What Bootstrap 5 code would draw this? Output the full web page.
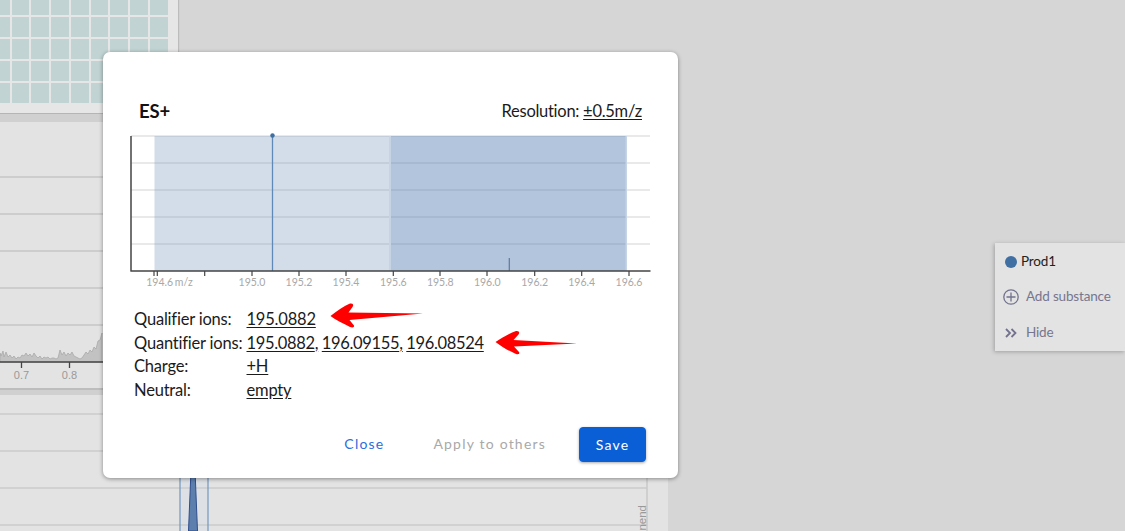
<!DOCTYPE html>
<html lang="en">
<head>
<meta charset="utf-8">
<title>ES+</title>
<link href="https://cdn.jsdelivr.net/npm/bootstrap@5.3.0/dist/css/bootstrap.min.css" rel="stylesheet">
<style>
html,body{height:100%}
body{background:#d6d6d6;font-family:Lato,"Open Sans",sans-serif;color:#1b1b1b;overflow:hidden;width:1125px;height:531px;position:relative}
.plate-panel{width:178px;height:113px;background:#e6e6e6;box-shadow:1px 0 1px rgba(0,0,0,.12)}
.plate-grid{display:grid;grid-template-columns:9.5px repeat(8,17.75px);grid-template-rows:15px repeat(4,20px);gap:2px;width:168px}
.plate-grid span{background:#c1d3d3}
.trace-panel{width:668px;background:#e3e3e3;line-height:0}
.trace-panel svg{display:block}
.sep-band{width:668px;height:9px;background:#d0d0d0;border-top:1px solid #b5b5b5}
.sep-band-b{height:7px;border-top:2px solid #bdbdbd}
.dialog-box{position:absolute;left:103px;top:52px;width:575px;height:426px;background:#fff;border:0;border-radius:7px;box-shadow:0 1px 4px rgba(0,0,0,.4);padding:47px 32px 16px 31px}
.dialog-head{padding-left:5px;padding-right:4px;height:24px;flex:none}
.dialog-title{font-size:18.5px;font-weight:700;margin:0;line-height:24px;color:#111;letter-spacing:-.2px}
.res-text{font-size:16.5px;line-height:24px;margin-top:-1px;letter-spacing:-.28px}
.under{color:inherit;text-decoration:underline;text-underline-offset:2px}
.spec-chart{display:block;flex:none;margin:7px -7px 0 -4px}
.ion-table{display:grid;flex:none;grid-template-columns:112.5px auto;font-size:16.5px;letter-spacing:-.2px;line-height:23.7px;margin-top:18px;justify-content:start}
.ion-list{letter-spacing:-.33px;word-spacing:-.3px}
.dialog-foot{flex:none;margin-top:24px;align-items:center;justify-content:flex-end}
.act-btn{font-size:14px;letter-spacing:1.2px;padding:0;border:0;background:none;line-height:20px}
.act-close{color:#2a6fdb;margin-right:49px;text-decoration:none}
.act-apply{color:#a9a9a9;margin-right:33px;text-decoration:none}
.act-save{background:#0a5fd6;border-color:#0a5fd6;color:#fff;width:67px;height:35px;padding:0;font-size:14px;letter-spacing:1.2px;border-radius:4px;box-shadow:0 1px 3px rgba(0,0,0,.35)}
.red-arrow{position:absolute}
.side-tools{position:absolute;left:995px;top:243px;width:130px;height:108px;background:#e3e3e3;box-shadow:-1px 1px 4px rgba(0,0,0,.25);font-size:13.5px;letter-spacing:-.17px;padding-left:9px}
.tool-row{height:36px;align-items:center}
.tool-row-first{height:36px;color:#222;padding-top:1px}
.tool-dot{width:12px;height:12px;border-radius:50%;background:#3f6fa3;margin:0 4px 0 1px}
.tool-ico{width:16px;margin-right:7px;flex:none;margin-left:-1px}
.tool-label{color:#76768f;margin-bottom:2px}
</style>
</head>
<body>
<div class="plate-panel">
  <div class="plate-grid">
    <span></span><span></span><span></span><span></span><span></span><span></span><span></span><span></span><span></span>
    <span></span><span></span><span></span><span></span><span></span><span></span><span></span><span></span><span></span>
    <span></span><span></span><span></span><span></span><span></span><span></span><span></span><span></span><span></span>
    <span></span><span></span><span></span><span></span><span></span><span></span><span></span><span></span><span></span>
    <span></span><span></span><span></span><span></span><span></span><span></span><span></span><span></span><span></span>
  </div>
</div>
<div class="sep-band"></div>
<div class="trace-panel">
  <svg width="668" height="266" viewBox="0 122 668 266">
    <g stroke="#c6c6c6" stroke-width="1.300"><path d="M0 177H668M0 214H668M0 251H668M0 288H668M0 325H668"/></g>
    <path d="M0 362V353L1 356 3 351 4 357 6 352 8 357 10 355 12 358 14 356 16 359 18 357 20 358 22 355 24 356 26 353 28 356 30 354 32 357 34 353 36 356 38 358 40 356 42 359 44 357 46 358 48 357 50 359 52 358 54 358 56 359 58 358 60 350 62 355 64 352 66 356 68 353 70 355 72 352 74 356 76 357 78 358 80 359 82 358 84 355 86 352 88 354 90 350 92 352 94 347 96 349 98 341 100 340 102 333V362Z" fill="#c2c2c2" stroke="#aaa" stroke-width=".8"/>
    <path d="M0 362H103M21.5 362V368M69.5 362V368" stroke="#444" stroke-width="1.3" fill="none"/>
    <g font-family="'Liberation Sans',sans-serif" font-size="11" fill="#999" text-anchor="middle"><text x="21.5" y="379">0.7</text><text x="69.5" y="379">0.8</text></g>
  </svg>
</div>
<div class="sep-band sep-band-b"></div>
<div class="trace-panel">
  <svg width="668" height="136" viewBox="0 395 668 136">
    <rect x="180" y="395" width="28" height="136" fill="#dde1e6"/>
    <path d="M0 414H647M0 451H647M0 488H647M0 525H647" stroke="#cbcbcb" stroke-width="1.3"/>
    <path d="M647 395V531" stroke="#c9c9c9" stroke-width="1.5"/>
    <path d="M180 395V531M208 395V531" stroke="#7397c0" stroke-width="1.2"/>
    <path d="M191 470H195L197.5 531H188.500Z" fill="#5d7fad" stroke="#2f4e8c" stroke-width="1"/>
    <text transform="translate(646 505) rotate(-90)" font-family="'Liberation Sans',sans-serif" font-size="11.500" fill="#999" text-anchor="end">nend</text>
  </svg>
</div>

<div class="card dialog-box">
  <div class="dialog-head d-flex justify-content-between align-items-center">
    <h5 class="dialog-title">ES+</h5>
    <div class="res-text">Resolution: <a href="#" class="under">±0.5m/z</a></div>
  </div>
  <svg class="spec-chart" width="523" height="160" viewBox="130 130 523 160">
    <path d="M131 136H650M131 163H650M131 190H650M131 217H650M131 244H650" stroke="#e2e2e2" stroke-width="1.5"/>
    <rect x="154.500" y="136" width="235.500" height="135" fill="#7e9cc1" fill-opacity=".34"/>
    <rect x="391" y="136" width="235" height="135" fill="#5e86b5" fill-opacity=".48"/>
    <rect x="389" y="136" width="2" height="135" fill="#c6d3e2"/>
    <rect x="625.500" y="136" width="1.500" height="135" fill="#c6d5e6"/>
    <path d="M272.500 136V271" stroke="#5f8ab8" stroke-width="1.300"/>
    <circle cx="272.500" cy="135.500" r="2.200" fill="#3f6fa3"/>
    <path d="M509.300 258V271" stroke="#60799b" stroke-width="1.200"/>
    <path d="M131 136V271.500M130.500 271H650.500" stroke="#444" stroke-width="1.500" fill="none"/>
    <path d="M154 271V276M157.300 271V276M204.700 271V276M252 271V276M299 271V276M346 271V276M393.300 271V276M440 271V276M487 271V276M534.700 271V276M581.700 271V276M629 271V276" stroke="#444" stroke-width="1.200"/>
    <g font-family="Lato,sans-serif" font-size="10.500" fill="#a8a8a8" text-anchor="middle">
      <text x="169.500" y="286" word-spacing="-1">194.6 m/z</text><text x="252" y="286">195.0</text><text x="299" y="286">195.2</text><text x="346" y="286">195.4</text><text x="393.300" y="286">195.6</text><text x="440.300" y="286">195.8</text><text x="487.300" y="286">196.0</text><text x="534.700" y="286">196.2</text><text x="581.700" y="286">196.4</text><text x="629" y="286">196.6</text>
    </g>
  </svg>
  <div class="ion-table">
    <div>Qualifier ions:</div><div><a href="#" class="under">195.0882</a></div>
    <div>Quantifier ions:</div><div class="ion-list"><a href="#" class="under">195.0882</a><a href="#" class="under">,</a> <a href="#" class="under">196.09155</a><a href="#" class="under">,</a> <a href="#" class="under">196.08524</a></div>
    <div>Charge:</div><div><a href="#" class="under">+H</a></div>
    <div>Neutral:</div><div><a href="#" class="under">empty</a></div>
  </div>
  <div class="dialog-foot d-flex">
    <a href="#" class="btn act-btn act-close">Close</a>
    <a href="#" class="btn act-btn act-apply">Apply to others</a>
    <button type="button" class="btn btn-primary act-save">Save</button>
  </div>
</div>

<svg class="red-arrow" style="left:328px;top:301px" width="98" height="28" viewBox="328 301 98 28"><path d="M330.500 316C337 311 344 306 350 303.500 353 303 354 305 352.500 307L348.500 312.500 423 313.500 349.500 320 354 325.500C354.500 327.500 352.500 328 350 327 343 323.500 336 320 330.500 316Z" fill="#fe0000"/></svg>
<svg class="red-arrow" style="left:493px;top:329px" width="86" height="28" viewBox="493 329 86 28"><path d="M495.500 342C502 338 510 333 516 331 519 330.500 520 332.500 518.500 334.500L513.500 340 577 343.500 514 346.500 519 352C520 354 518.500 354.800 516 354 509 351 502 347 495.500 342Z" fill="#fe0000"/></svg>

<div class="side-tools d-flex flex-column">
  <div class="d-flex tool-row tool-row-first"><span class="tool-dot"></span>Prod1</div>
  <div class="d-flex tool-row"><svg class="tool-ico" width="16" height="16" viewBox="0 0 16 16" fill="none" stroke="#72728f" stroke-width="1.300"><circle cx="8" cy="8" r="7.200"/><path d="M8 3.500V12.500M3.500 8H12.500"/></svg><span class="tool-label">Add substance</span></div>
  <div class="d-flex tool-row"><svg class="tool-ico" width="16" height="16" viewBox="0 0 16 16" fill="none" stroke="#72728f" stroke-width="1.800"><path d="M3 4l4 4-4 4M8.500 4l4 4-4 4"/></svg><span class="tool-label">Hide</span></div>
</div>
</body>
</html>
